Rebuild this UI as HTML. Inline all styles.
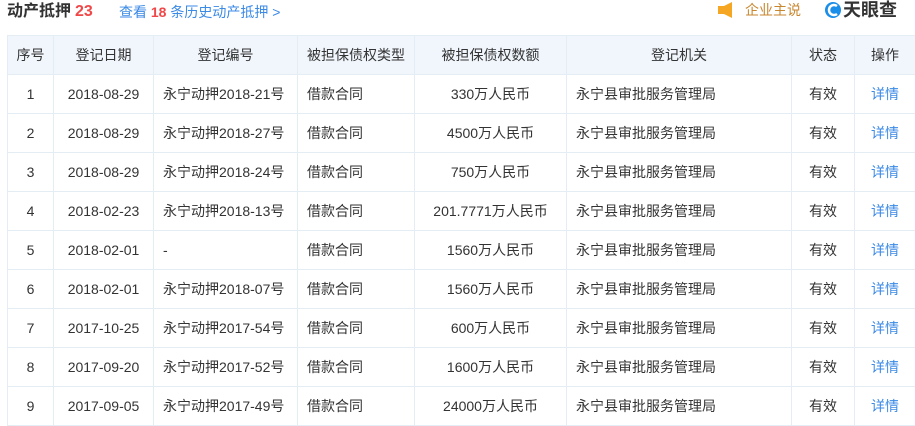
<!DOCTYPE html>
<html><head><meta charset="utf-8"><style>
body{margin:0;width:915px;height:422px;overflow:hidden;background:#fff;font-family:"Liberation Sans","Noto Sans CJK SC",sans-serif;color:#333;}
.t{position:absolute;left:7px;top:1px;font-size:16px;font-weight:bold;color:#333;line-height:22px}
.t b{color:#f04848;margin-left:4px}
.h{position:absolute;left:119px;top:3px;font-size:14px;color:#3b8ae6;line-height:18px}
.h b{color:#f04848}
.r{position:absolute;left:718px;top:0;font-size:14px;color:#c9862f;line-height:20px}
.logo{position:absolute;left:825px;top:-1px;font-size:18px;font-weight:bold;color:#333;line-height:22px}
table{position:absolute;left:7px;top:35px;border-collapse:collapse;font-size:14px;table-layout:fixed;width:908px}
td,th{border:1px solid #e4ecf4;height:38px;padding:0;text-align:center;font-weight:normal;white-space:nowrap}
th{background:#f0f6fc;color:#333}
td.l{text-align:left;padding-left:9px}
td.a{color:#3b8ae6}
</style></head><body>
<div class="t">动产抵押<b>23</b></div>
<div class="h">查看 <b>18</b> 条历史动产抵押 &gt;</div>
<svg style="position:absolute;left:718px;top:2px" width="18" height="16"><rect x="0" y="4" width="6" height="8" fill="#f5a623"/><path d="M6 4 L14 0 L14 16 L6 12Z" fill="#f5a623"/></svg>
<div class="r" style="left:745px">企业主说</div>
<svg style="position:absolute;left:824px;top:1px" width="18" height="18"><circle cx="9" cy="9" r="8" fill="#1a8ee8"/><path d="M13 5 A5 5 0 1 0 13 13" stroke="#fff" stroke-width="2.5" fill="none"/></svg>
<div class="logo" style="left:843px">天眼查</div>
<table>
<colgroup><col style="width:46px"><col style="width:100px"><col style="width:144px"><col style="width:117px"><col style="width:152px"><col style="width:225px"><col style="width:63px"><col style="width:61px"></colgroup>
<tr><th>序号</th><th>登记日期</th><th>登记编号</th><th>被担保债权类型</th><th>被担保债权数额</th><th>登记机关</th><th>状态</th><th>操作</th></tr>
<tr><td>1</td><td>2018-08-29</td><td class="l">永宁动押2018-21号</td><td class="l">借款合同</td><td>330万人民币</td><td class="l">永宁县审批服务管理局</td><td>有效</td><td class="a">详情</td></tr>
<tr><td>2</td><td>2018-08-29</td><td class="l">永宁动押2018-27号</td><td class="l">借款合同</td><td>4500万人民币</td><td class="l">永宁县审批服务管理局</td><td>有效</td><td class="a">详情</td></tr>
<tr><td>3</td><td>2018-08-29</td><td class="l">永宁动押2018-24号</td><td class="l">借款合同</td><td>750万人民币</td><td class="l">永宁县审批服务管理局</td><td>有效</td><td class="a">详情</td></tr>
<tr><td>4</td><td>2018-02-23</td><td class="l">永宁动押2018-13号</td><td class="l">借款合同</td><td>201.7771万人民币</td><td class="l">永宁县审批服务管理局</td><td>有效</td><td class="a">详情</td></tr>
<tr><td>5</td><td>2018-02-01</td><td class="l">-</td><td class="l">借款合同</td><td>1560万人民币</td><td class="l">永宁县审批服务管理局</td><td>有效</td><td class="a">详情</td></tr>
<tr><td>6</td><td>2018-02-01</td><td class="l">永宁动押2018-07号</td><td class="l">借款合同</td><td>1560万人民币</td><td class="l">永宁县审批服务管理局</td><td>有效</td><td class="a">详情</td></tr>
<tr><td>7</td><td>2017-10-25</td><td class="l">永宁动押2017-54号</td><td class="l">借款合同</td><td>600万人民币</td><td class="l">永宁县审批服务管理局</td><td>有效</td><td class="a">详情</td></tr>
<tr><td>8</td><td>2017-09-20</td><td class="l">永宁动押2017-52号</td><td class="l">借款合同</td><td>1600万人民币</td><td class="l">永宁县审批服务管理局</td><td>有效</td><td class="a">详情</td></tr>
<tr><td>9</td><td>2017-09-05</td><td class="l">永宁动押2017-49号</td><td class="l">借款合同</td><td>24000万人民币</td><td class="l">永宁县审批服务管理局</td><td>有效</td><td class="a">详情</td></tr>
</table>
</body></html>
